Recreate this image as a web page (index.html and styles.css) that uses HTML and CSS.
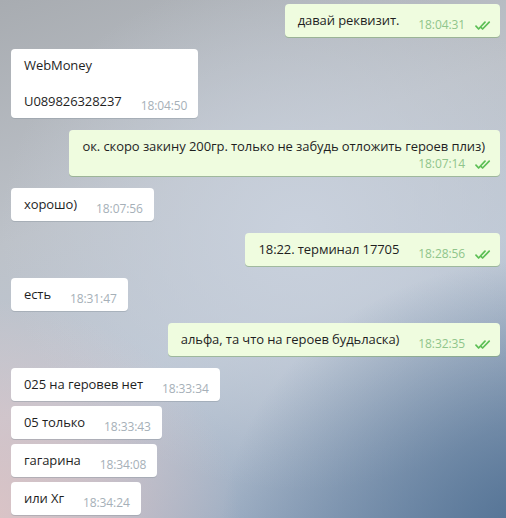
FILE: index.html
```html
<!DOCTYPE html>
<html lang="ru">
<head>
    <meta charset="UTF-8">
    <title>Чат</title>
    <link rel="stylesheet" href="styles.css">
</head>
<body>
    <main class="chat">
        <div class="group out">
            <div class="bubble">
                <span class="text">давай реквизит.</span>
                <span class="meta"><span class="time">18:04:31</span><svg class="check" viewBox="0 0 17 9"><path d="M1 5.2 L3.6 8 L10 1.2 M7.6 8 L14.2 1.2 M6.2 6.6 L7.6 8"/></svg></span>
            </div>
        </div>

        <div class="group in">
            <div class="bubble">
                <span class="text">WebMoney<br><br>U089826328237</span>
                <span class="meta"><span class="time">18:04:50</span></span>
            </div>
        </div>

        <div class="group out">
            <div class="bubble wide">
                <span class="text">ок. скоро закину 200гр. только не забудь отложить героев плиз)</span>
                <span class="meta"><span class="time">18:07:14</span><svg class="check" viewBox="0 0 17 9"><path d="M1 5.2 L3.6 8 L10 1.2 M7.6 8 L14.2 1.2 M6.2 6.6 L7.6 8"/></svg></span>
            </div>
        </div>

        <div class="group in">
            <div class="bubble">
                <span class="text">хорошо)</span>
                <span class="meta"><span class="time">18:07:56</span></span>
            </div>
        </div>

        <div class="group out">
            <div class="bubble">
                <span class="text">18:22. терминал 17705</span>
                <span class="meta"><span class="time">18:28:56</span><svg class="check" viewBox="0 0 17 9"><path d="M1 5.2 L3.6 8 L10 1.2 M7.6 8 L14.2 1.2 M6.2 6.6 L7.6 8"/></svg></span>
            </div>
        </div>

        <div class="group in">
            <div class="bubble">
                <span class="text">есть</span>
                <span class="meta"><span class="time">18:31:47</span></span>
            </div>
        </div>

        <div class="group out">
            <div class="bubble">
                <span class="text">альфа, та что на героев будьласка)</span>
                <span class="meta"><span class="time">18:32:35</span><svg class="check" viewBox="0 0 17 9"><path d="M1 5.2 L3.6 8 L10 1.2 M7.6 8 L14.2 1.2 M6.2 6.6 L7.6 8"/></svg></span>
            </div>
        </div>

        <div class="group in">
            <div class="bubble">
                <span class="text">025 на геровев нет</span>
                <span class="meta"><span class="time">18:33:34</span></span>
            </div>
            <div class="bubble">
                <span class="text">05 только</span>
                <span class="meta"><span class="time">18:33:43</span></span>
            </div>
            <div class="bubble">
                <span class="text">гагарина</span>
                <span class="meta"><span class="time">18:34:08</span></span>
            </div>
            <div class="bubble">
                <span class="text">или Хг</span>
                <span class="meta"><span class="time">18:34:24</span></span>
            </div>
        </div>
    </main>
</body>
</html>
```

FILE: styles.css
```css
html, body {
    margin: 0;
    height: 100%;
    overflow: hidden;
}
body {
    font-family: 'Open Sans', 'Noto Sans', sans-serif;
    font-size: 13px;
    color: #1f1f1f;
    background:
        radial-gradient(ellipse 320px 280px at 540px 540px, #4f6f92 0%, rgba(79, 111, 146, 0.55) 45%, rgba(79, 111, 146, 0) 100%),
        radial-gradient(ellipse 260px 220px at -20px 520px, #dcc4c6 0%, rgba(220, 196, 198, 0.6) 50%, rgba(220, 196, 198, 0) 100%),
        radial-gradient(ellipse 300px 260px at 300px 230px, #c9d1dd 0%, rgba(201, 209, 221, 0) 100%),
        linear-gradient(160deg, #a8acb1 0%, #bdc2c9 35%, #bcc6d3 60%, #8ea2bb 100%);
}
.chat {
    display: flex;
    flex-direction: column;
    gap: 12px;
    padding: 4px 6px 0 11px;
}
.group {
    display: flex;
    flex-direction: column;
    gap: 5px;
}
.group.out {
    align-items: flex-end;
}
.group.in {
    align-items: flex-start;
}
.bubble {
    display: flex;
    align-items: flex-end;
    padding: 7px 11px 8px 13px;
    border-radius: 4px;
    background-color: #ffffff;
    box-shadow: 0 1px 0 rgba(140, 150, 160, 0.45);
}
.out .bubble {
    padding-right: 8px;
    background-color: #effcdf;
    box-shadow: 0 1px 0 rgba(130, 170, 110, 0.55);
}
.text {
    line-height: 18px;
    letter-spacing: -0.08px;
    white-space: nowrap;
}
.meta {
    display: flex;
    align-items: center;
    height: 18px;
    margin-bottom: -5px;
    margin-left: 19px;
}
.time {
    font-size: 12px;
    line-height: 18px;
    letter-spacing: -0.1px;
    color: #a6b0b8;
}
.out .time {
    color: #8fc58b;
}
.check {
    width: 17px;
    height: 9px;
    margin-left: 10px;
    margin-top: 1px;
    fill: none;
    stroke: #5cbf55;
    stroke-width: 1.7;
    stroke-linecap: round;
    stroke-linejoin: round;
}
.bubble.wide {
    flex-direction: column;
    padding-right: 8px;
}
.wide .text {
    padding-right: 7px;
}
.wide .meta {
    align-self: flex-end;
}
```
